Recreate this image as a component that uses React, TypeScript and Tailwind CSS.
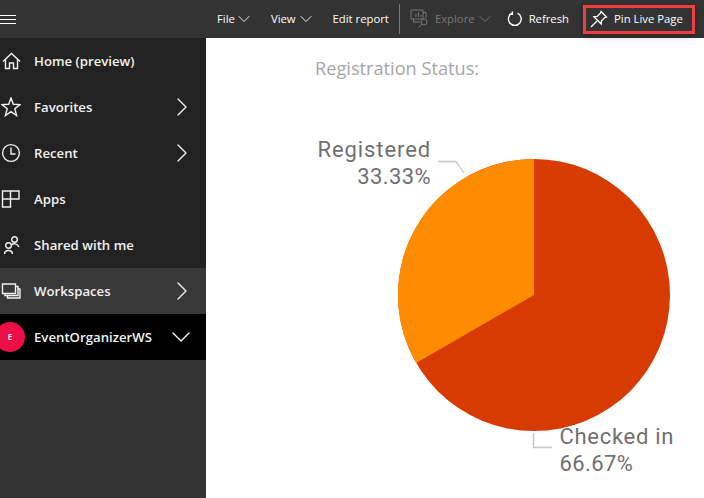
import React from "react";
import { ChevronDown, ChevronRight } from "lucide-react";

const HomeIcon = () => (
  <svg width="20" height="20" viewBox="0 0 20 20" fill="none" stroke="currentColor" strokeWidth="1.4">
    <path d="M2 10.500 L10.500 2.500 L19 10.500" />
    <path d="M4.500 8.500 V17.500 H8.500 V12 H12.500 V17.500 H16.500 V8.500" />
  </svg>
);

const StarIcon = () => (
  <svg width="20" height="20" viewBox="0 0 20 20" fill="none" stroke="currentColor" strokeWidth="1.4">
    <path d="M10 1 L12.300 7.300 L19 7.600 L13.800 11.700 L15.600 18.500 L10 14.600 L4.400 18.500 L6.200 11.700 L1 7.600 L7.700 7.300 Z" />
  </svg>
);

const ClockIcon = () => (
  <svg width="20" height="20" viewBox="0 0 20 20" fill="none" stroke="currentColor" strokeWidth="1.4">
    <circle cx="10" cy="10" r="8.400" />
    <path d="M10 4.500 V11 H14.500" />
  </svg>
);

const AppsIcon = () => (
  <svg width="20" height="20" viewBox="0 0 20 20" fill="none" stroke="currentColor" strokeWidth="1.4">
    <path d="M1.500 2 H9.500 V18 H1.500 Z M1.500 10 H18 V2 H9.500" />
  </svg>
);

const SharedIcon = () => (
  <svg width="20" height="20" viewBox="0 0 20 20" fill="none" stroke="currentColor" strokeWidth="1.4">
    <circle cx="13.500" cy="4.500" r="2.800" />
    <path d="M10.500 10 C12 8 16.500 8.500 18 12" />
    <circle cx="7.500" cy="10.500" r="2.800" />
    <path d="M3.500 19 C3.500 14.500 11 14 11.500 19" />
  </svg>
);

const WorkspacesIcon = () => (
  <svg width="20" height="20" viewBox="0 0 20 20" fill="none" stroke="currentColor" strokeWidth="1.4">
    <path d="M1.500 3 H14.500 V12.500 H1.500 Z" />
    <path d="M14.500 5.500 H17 V14.500 H4 V12.500" />
    <path d="M17 8 H19 V17 H6.500 V14.500" />
  </svg>
);

const ExploreIcon = () => (
  <svg width="20" height="20" viewBox="0 0 20 20" fill="none" stroke="currentColor" strokeWidth="1">
    <path d="M1 1 H13 V10 H1 Z" />
    <path d="M3.500 10 V13 H10 M13 3.500 H16 V9" />
    <path d="M6 8 V5 M8.500 8 V3.500 M11 8 V6" />
    <circle cx="14" cy="13" r="3" />
    <path d="M11.800 15.200 L8.500 18.500" />
  </svg>
);

const RefreshIcon = () => (
  <svg width="16" height="16" viewBox="0 0 16 16" fill="none" stroke="currentColor" strokeWidth="1.4">
    <path d="M5 2.200 A6.400 6.400 0 1 0 10.600 2.200" />
    <path d="M5.400 0.500 V3.400 H2.600" />
  </svg>
);

const PinIcon = () => (
  <svg width="18" height="18" viewBox="0 0 18 18" fill="none" stroke="currentColor" strokeWidth="1.300">
    <path d="M11 1.500 L16.500 7 L14.800 7.600 L11.500 10.800 L11.200 14 L4 6.800 L7.200 6.500 L10.400 3.200 Z" />
    <path d="M7 11 L1 17" />
  </svg>
);

const NavRow = ({
  icon,
  label,
  chevron,
  className,
}: {
  icon: React.ReactNode;
  label: string;
  chevron?: boolean;
  className?: string;
}) => (
  <div className={`flex h-[46px] items-center pl-[1px] pr-[8px] text-[#f1f1f1] ${className ?? ""}`}>
    <span className="flex w-[33px] shrink-0">{icon}</span>
    <span className="flex-1 pt-[2px] text-[13.2px] font-semibold">{label}</span>
    {chevron && <ChevronRight size={32} strokeWidth={1} />}
  </div>
);

export default function App() {
  return (
    <div className="flex h-[498px] w-[704px] flex-col overflow-hidden bg-white font-['Open_Sans',sans-serif]">
      {/* top bar */}
      <header className="flex h-[38px] shrink-0 items-center whitespace-nowrap bg-[#333333] text-[11.3px] text-white">
        <div className="flex w-[217px] shrink-0 flex-col gap-[3px]">
          <span className="h-px w-[16px] bg-white" />
          <span className="h-px w-[16px] bg-white" />
          <span className="h-px w-[16px] bg-white" />
        </div>
        <span>File</span>
        <ChevronDown size={20} strokeWidth={1.1} className="ml-[-1px]" />
        <span className="ml-[17px]">View</span>
        <ChevronDown size={20} strokeWidth={1.1} />
        <span className="ml-[17px]">Edit report</span>
        <span className="ml-[10px] h-[30px] w-px bg-[#777777]" />
        <span className="ml-[10px] text-[#777777]">
          <ExploreIcon />
        </span>
        <span className="ml-[5px] text-[#777777]">Explore</span>
        <ChevronDown size={20} strokeWidth={1.1} className="text-[#777777]" />
        <span className="ml-[12px]">
          <RefreshIcon />
        </span>
        <span className="ml-[6px]">Refresh</span>
        <div className="ml-[14px] flex h-[29px] w-[112px] items-center gap-[6px] border-[3px] border-[#ef3e42] pl-[4px] shadow-[0_2px_6px_rgba(0,0,0,0.3)]">
          <PinIcon />
          <span>Pin Live Page</span>
        </div>
      </header>

      <div className="flex min-h-0 flex-1">
        {/* sidebar */}
        <nav className="flex w-[206px] shrink-0 flex-col bg-[#333333]">
          <div className="bg-[#222222]">
            <NavRow icon={<HomeIcon />} label="Home (preview)" />
            <NavRow icon={<StarIcon />} label="Favorites" chevron />
            <NavRow icon={<ClockIcon />} label="Recent" chevron />
            <NavRow icon={<AppsIcon />} label="Apps" />
            <NavRow icon={<SharedIcon />} label="Shared with me" />
          </div>
          <NavRow icon={<WorkspacesIcon />} label="Workspaces" chevron className="bg-[#383838]" />
          <div className="flex h-[46px] items-center bg-black pr-[9px] text-[#f1f1f1]">
            <span className="ml-[-5px] mr-[9px] flex h-[30px] w-[30px] shrink-0 items-center justify-center rounded-full bg-[#ee0e47] text-[8px] font-semibold text-white">
              E
            </span>
            <span className="flex-1 pt-[2px] text-[13.2px] font-semibold">EventOrganizerWS</span>
            <ChevronDown size={32} strokeWidth={1} />
          </div>
        </nav>

        {/* report */}
        <main className="relative flex-1">
          <h2 className="absolute left-[109px] top-[17px] text-[18.2px] text-[#a6a6a6]">Registration Status:</h2>

          <svg className="absolute left-0 top-0" width="498" height="460" viewBox="206 38 498 460">
            <circle cx="534" cy="295" r="136" fill="#d83b01" />
            <path d="M534 295 L416.200 363 A136 136 0 0 1 534 159 Z" fill="#ff8c00" />
            <path d="M438 161.500 H456 L464 173" fill="none" stroke="#c8c8c8" strokeWidth="1.300" />
            <path d="M533.500 433 V447.500 H552" fill="none" stroke="#c8c8c8" strokeWidth="1.500" />
          </svg>

          <div className="absolute right-[273px] top-[98px] text-right font-['Roboto',sans-serif] text-[22px] leading-[27px] text-[#707070]">
            <div className="tracking-[0.9px]">Registered</div>
            <div className="tracking-[0.4px]">33.33%</div>
          </div>
          <div className="absolute left-[353.500px] top-[385px] font-['Roboto',sans-serif] text-[22px] leading-[27px] text-[#707070]">
            <div className="tracking-[0.7px]">Checked in</div>
            <div className="tracking-[0.4px]">66.67%</div>
          </div>
        </main>
      </div>
    </div>
  );
}
